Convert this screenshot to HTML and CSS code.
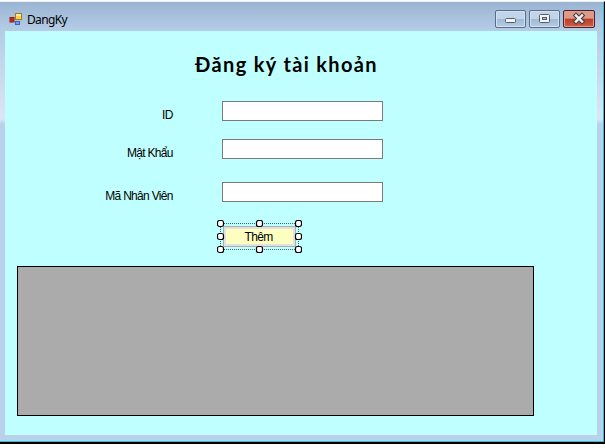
FILE: index.html
```html
<!DOCTYPE html>
<html lang="vi">
<head>
<meta charset="utf-8">
<title>DangKy</title>
<link rel="stylesheet" href="styles.css">
</head>
<body>
<div class="window">
  <header class="titlebar">
    <svg class="app-icon" width="14" height="13" viewBox="0 0 14 13">
      <rect x="1" y="4.5" width="4" height="4.500" fill="#c8281c" stroke="#8e1e1c"/>
      <rect x="6.500" y=".5" width="6" height="6" fill="#fbd04b" stroke="#a87a10"/>
      <path d="M7 1h5v2H7z" fill="#ffe9a0"/>
      <rect x="6.500" y="8.5" width="4" height="3" fill="#6da0f0" stroke="#3564c0"/>
    </svg>
    <span class="caption">DangKy</span>
    <div class="controls">
      <span class="control"><svg width="29" height="16" viewBox="0 0 29 16"><rect x="9.5" y="7.5" width="10" height="4" rx="1" fill="#f4f4f4" stroke="#555d6b"/></svg></span>
      <span class="control"><svg width="29" height="16" viewBox="0 0 29 16"><rect x="9.5" y="3.5" width="10" height="8" rx="1" fill="#f4f4f4" stroke="#555d6b"/><rect x="12.5" y="6.5" width="4" height="2" fill="#a9c0dc" stroke="#555d6b"/></svg></span>
      <span class="control close"><svg width="30" height="16" viewBox="0 0 30 16"><path d="M12 4.500l6 6M18 4.500l-6 6" stroke="#4d4250" stroke-width="4.600" stroke-linecap="square"/><path d="M12 4.500l6 6M18 4.500l-6 6" stroke="#f2f2f2" stroke-width="2.400" stroke-linecap="square"/></svg></span>
    </div>
  </header>
  <main class="client">
    <h1 class="title">Đăng ký tài khoản</h1>
    <form class="form">
      <label class="label" for="id"><span>ID</span></label><input class="field" id="id">
      <label class="label" for="pw"><span>Mật Khẩu</span></label><input class="field" id="pw">
      <label class="label" for="nv"><span>Mã Nhân Viên</span></label><input class="field" id="nv">
    </form>
    <div class="selection">
      <button class="add" type="button">Thêm</button>
      <svg class="handles" width="85" height="34" viewBox="0 0 85 34">
        <path class="outline" d="M3 3.500H82M3 29.500H82M3.500 3V30M81.500 3V30"/>
        <g class="knobs">
          <rect x=".5" y=".5" width="6" height="6" rx="2"/><rect x="39.500" y=".5" width="6" height="6" rx="2"/><rect x="78.500" y=".5" width="6" height="6" rx="2"/>
          <rect x=".5" y="13.500" width="6" height="6" rx="2"/><rect x="78.500" y="13.500" width="6" height="6" rx="2"/>
          <rect x=".5" y="26.500" width="6" height="6" rx="2"/><rect x="39.500" y="26.500" width="6" height="6" rx="2"/><rect x="78.500" y="26.500" width="6" height="6" rx="2"/>
        </g>
      </svg>
    </div>
    <div class="data-grid"></div>
  </main>
</div>
</body>
</html>
```
FILE: styles.css
```css
* { box-sizing: border-box; }
html { background: #fff; }
body { margin: 0; padding-top: 1px; overflow: hidden; font: 12px "Liberation Sans", Arial, sans-serif; color: #000; }
.window {
  width: 605px; height: 443px; padding: 0 6px 6px 5px;
  border: solid #000; border-width: 1px 1px 2px 0;
  border-top-color: #e9eff6;
  box-shadow: inset -1px -1px #2fbfd2;
  background:
    linear-gradient(#9ab4d2, #b5cde7 29px, transparent 29px) 0 0 / 603px 29px no-repeat,
    linear-gradient(#b5cce6, #dce7f5 88px, #b9d1ea 93px) 0 29px / 603px 411px no-repeat,
    #b9d1ea;
}
.titlebar { height: 29px; display: flex; align-items: flex-start; padding: 8px 3px 0 4px; }
.app-icon { margin-top: 3px; }
.caption { margin: 1px auto 0 4px; font: 12px/17px "Noto Sans", sans-serif; letter-spacing: -0.65px; }
.controls { display: flex; gap: 3px; }
.control {
  width: 31px; height: 18px; border: 1px solid #596d86; border-radius: 2px;
  background: linear-gradient(#c2d4e9 48%, #9fb9d5 50%, #b5cce4);
  box-shadow: inset 0 0 0 1px #d3e1f0;
}
.control svg { display: block; }
.close {
  width: 32px; border-color: #4b1f2b;
  background: linear-gradient(#df9a87 45%, #bd3c25 50%, #cc6043);
  box-shadow: inset 0 0 0 1px #df9b8b;
}
.client { width: 592px; height: 404px; background: #c0ffff; padding: 19px 0 0 12px; }
.title { margin: 0 0 0 178px; height: 51px; font: bold 20px/28px Lato, sans-serif; letter-spacing: 1.35px; white-space: nowrap; }
.form { display: grid; grid-template-columns: 155px 161px; grid-template-rows: 38px 43px 20px; column-gap: 50px; }
.label { display: flex; justify-content: flex-end; padding-top: 7px; line-height: 14px; white-space: nowrap; }
.label span { letter-spacing: -0.7px; margin-right: -0.7px; }
.field { width: 161px; height: 20px; border: 1px solid #7a7a7a; background: #fff; padding: 1px 3px; }
.selection { position: relative; width: 73px; height: 21px; margin: 24px 0 19px 206px; }
.add { display: block; width: 73px; height: 21px; padding: 2px 2px 0 0; border: 1px solid #adadad; background: #ffffc0; box-shadow: inset 0 0 0 2px #e1e1e1; font: 12px/17px "Liberation Sans", Arial, sans-serif; letter-spacing: -0.7px; color: #000; }
.handles { position: absolute; left: -6px; top: -6px; }
.outline { stroke: #346d70; stroke-dasharray: 1 1; fill: none; }
.knobs { fill: #fff; stroke: #000; stroke-width: 1.2; }
.data-grid { width: 517px; height: 150px; border: 1px solid #000; background: #ababab; }
```
